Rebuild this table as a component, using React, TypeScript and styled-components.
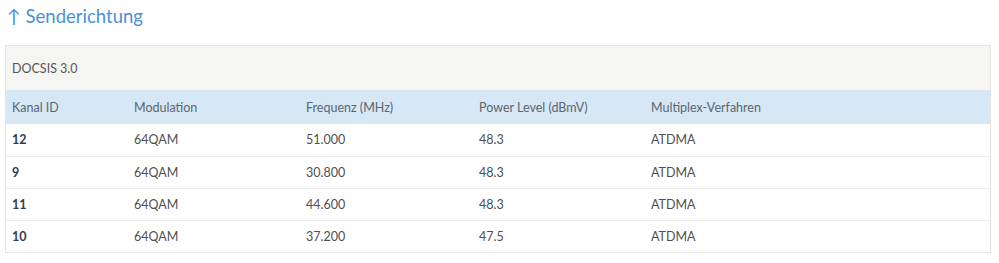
import React from "react";
import styled, { createGlobalStyle } from "styled-components";

const Global = createGlobalStyle`
  html, body { margin: 0; padding: 0; background: #fff; }
  body { font-family: Lato, "Noto Sans", sans-serif; color: #555; }
`;

const Page = styled.div`
  padding: 0 8px 0 5px;
`;

const Title = styled.h2`
  margin: 0;
  height: 45px;
  padding: 4px 0 0 2px;
  box-sizing: border-box;
  font-size: 18.5px;
  font-weight: 400;
  color: #4a8fdc;
  line-height: 25px;
`;

const Panel = styled.div`
  border: 1px solid #e4e4e4;
`;

const PanelHead = styled.div`
  height: 44px;
  display: flex;
  align-items: center;
  padding-left: 6px;
  background: #f5f5f3;
  font-size: 12.5px;
  color: #555;
`;

const Table = styled.table`
  width: 100%;
  table-layout: fixed;
  border-collapse: collapse;
  font-size: 12.5px;
`;

const HeadCell = styled.th<{ $w?: number }>`
  box-sizing: border-box;
  background: #d6e7f6;
  height: 34px;
  padding: 0 0 0 6px;
  text-align: left;
  font-weight: 400;
  color: #5b6670;
  width: ${(p) => (p.$w ? `${p.$w}px` : "auto")};
`;

const Row = styled.tr`
  & + & td { border-top: 1px solid #eaeaea; }
`;

const Cell = styled.td<{ $bold?: boolean }>`
  box-sizing: border-box;
  height: 32px;
  padding: 0 0 0 6px;
  color: ${(p) => (p.$bold ? "#2f3e4e" : "#4f4f4f")};
  font-weight: ${(p) => (p.$bold ? 700 : 400)};
`;

const rows = [
  ["12", "64QAM", "51.000", "48.3", "ATDMA"],
  ["9", "64QAM", "30.800", "48.3", "ATDMA"],
  ["11", "64QAM", "44.600", "48.3", "ATDMA"],
  ["10", "64QAM", "37.200", "47.5", "ATDMA"],
];

export default function App() {
  return (
    <Page>
      <Global />
      <Title>↑ Senderichtung</Title>
      <Panel>
        <PanelHead>DOCSIS 3.0</PanelHead>
        <Table>
          <thead>
            <tr>
              <HeadCell $w={122}>Kanal ID</HeadCell>
              <HeadCell $w={172}>Modulation</HeadCell>
              <HeadCell $w={173}>Frequenz (MHz)</HeadCell>
              <HeadCell $w={172}>Power Level (dBmV)</HeadCell>
              <HeadCell>Multiplex-Verfahren</HeadCell>
            </tr>
          </thead>
          <tbody>
            {rows.map((r) => (
              <Row key={r[0]}>
                {r.map((c, i) => (
                  <Cell key={i} $bold={i === 0}>
                    {c}
                  </Cell>
                ))}
              </Row>
            ))}
          </tbody>
        </Table>
      </Panel>
    </Page>
  );
}
